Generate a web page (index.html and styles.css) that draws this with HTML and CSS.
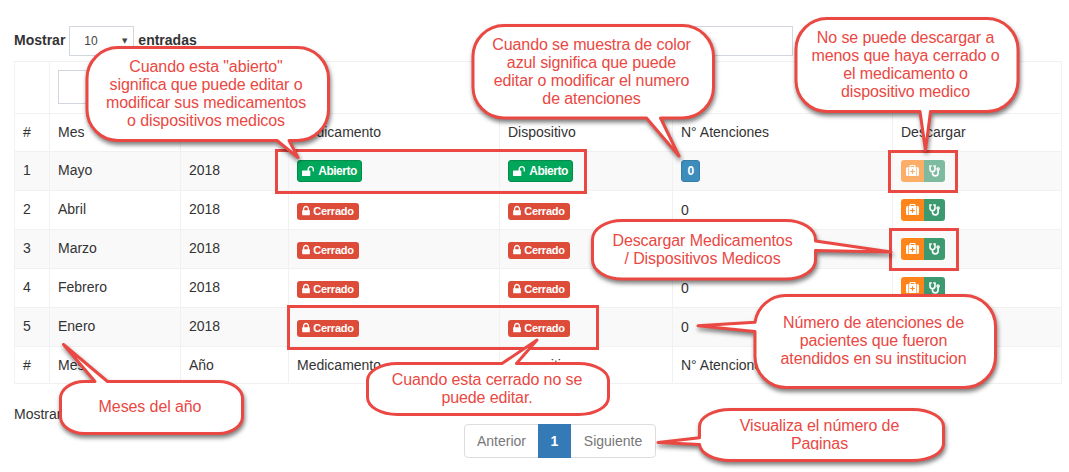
FILE: index.html
```html
<!DOCTYPE html>
<html lang="es">
<head>
<meta charset="utf-8">
<title>Atenciones</title>
<link rel="stylesheet" href="styles.css">
</head>
<body>
<svg class="defs" width="0" height="0">
  <symbol id="unlock" viewBox="0 0 1664 1792"><path d="M1664 576v256q0 26-19 45t-45 19h-64q-26 0-45-19t-19-45v-256q0-106-75-181t-181-75-181 75-75 181v192h96q40 0 68 28t28 68v576q0 40-28 68t-68 28h-960q-40 0-68-28t-28-68v-576q0-40 28-68t68-28h672v-192q0-185 131.500-316.500t316.500-131.500 316.500 131.500 131.500 316.500z"/></symbol>
  <symbol id="lock" viewBox="320 0 1152 1792"><path d="M640 768h512v-192q0-106-75-181t-181-75-181 75-75 181v192zm832 96v576q0 40-28 68t-68 28h-960q-40 0-68-28t-28-68v-576q0-40 28-68t68-28h32v-192q0-184 132-316t316-132 316 132 132 316v192h32q40 0 68 28t28 68z"/></symbol>
  <symbol id="kit" viewBox="0 0 13 12"><path fill-rule="evenodd" d="M3.500 2V1q0-1 1-1h4q1 0 1 1v1h.8v9H2.700V2zM4.700 2h3.600V1.100H4.700zM5.900 4.200v1.700H4.200v1.200h1.700v1.700h1.200V7.100h1.700V5.900H7.100V4.200zM2.100 2v9H1.600Q0 11 0 9.400V3.600Q0 2 1.600 2zM10.900 2h.5Q13 2 13 3.600v5.800Q13 11 11.400 11h-.5z"/></symbol>
  <symbol id="steth" viewBox="0 0 11 12"><path fill="none" stroke="#fff" stroke-width="1.600" stroke-linecap="round" d="M2.200 1H1v3.100a2.500 2.600 0 0 0 5 0V1H4.800M3.500 6.900v1.400a2.800 2.600 0 0 0 5.600 0V5"/><circle cx="9.100" cy="4" r="1.150" fill="none" stroke="#fff" stroke-width="1.300"/></symbol>
</svg>

<div class="toolbar">
  <div class="length"><b>Mostrar</b><span class="select">10<i>▼</i></span><b>entradas</b></div>
  <span class="search-box"></span>
</div>

<table class="grid">
  <colgroup><col class="c1"><col class="c2"><col class="c3"><col class="c4"><col class="c5"><col class="c6"><col class="c7"></colgroup>
  <thead>
    <tr class="filters"><td></td><td><span class="filter"></span></td><td></td><td></td><td></td><td></td><td></td></tr>
    <tr class="head"><td>#</td><td>Mes</td><td></td><td>Medicamento</td><td>Dispositivo</td><td>N° Atenciones</td><td>Descargar</td></tr>
  </thead>
  <tbody>
    <tr><td>1</td><td>Mayo</td><td>2018</td>
      <td><span class="btn open"><svg><use href="#unlock"/></svg>Abierto</span></td>
      <td><span class="btn open"><svg><use href="#unlock"/></svg>Abierto</span></td>
      <td><span class="btn count">0</span></td>
      <td><span class="downloads disabled"><span class="kit"><svg><use href="#kit"/></svg></span><span class="steth"><svg><use href="#steth"/></svg></span></span></td></tr>
    <tr><td>2</td><td>Abril</td><td>2018</td>
      <td><span class="label"><svg><use href="#lock"/></svg>Cerrado</span></td>
      <td><span class="label"><svg><use href="#lock"/></svg>Cerrado</span></td>
      <td class="num">0</td>
      <td><span class="downloads"><span class="kit"><svg><use href="#kit"/></svg></span><span class="steth"><svg><use href="#steth"/></svg></span></span></td></tr>
    <tr><td>3</td><td>Marzo</td><td>2018</td>
      <td><span class="label"><svg><use href="#lock"/></svg>Cerrado</span></td>
      <td><span class="label"><svg><use href="#lock"/></svg>Cerrado</span></td>
      <td></td>
      <td><span class="downloads"><span class="kit"><svg><use href="#kit"/></svg></span><span class="steth"><svg><use href="#steth"/></svg></span></span></td></tr>
    <tr><td>4</td><td>Febrero</td><td>2018</td>
      <td><span class="label"><svg><use href="#lock"/></svg>Cerrado</span></td>
      <td><span class="label"><svg><use href="#lock"/></svg>Cerrado</span></td>
      <td class="num">0</td>
      <td><span class="downloads"><span class="kit"><svg><use href="#kit"/></svg></span><span class="steth"><svg><use href="#steth"/></svg></span></span></td></tr>
    <tr><td>5</td><td>Enero</td><td>2018</td>
      <td><span class="label"><svg><use href="#lock"/></svg>Cerrado</span></td>
      <td><span class="label"><svg><use href="#lock"/></svg>Cerrado</span></td>
      <td class="num">0</td>
      <td></td></tr>
  </tbody>
  <tfoot>
    <tr class="foot"><td>#</td><td>Mes</td><td>Año</td><td>Medicamento</td><td>Dispositivo</td><td>N° Atenciones</td><td></td></tr>
  </tfoot>
</table>

<div class="info">Mostrando</div>
<div class="pager"><span class="prev">Anterior</span><span class="current">1</span><span class="next">Siguiente</span></div>

<svg class="shapes" viewBox="0 0 1069 472">
  <g class="boxes">
    <rect x="276.500" y="150.500" width="309" height="42"/>
    <rect x="288.500" y="306.500" width="309" height="42"/>
    <rect x="889.500" y="151.500" width="67" height="40"/>
    <rect x="890.500" y="229.500" width="67" height="40"/>
  </g>
  <g class="balloons">
    <path class="shadow" d="M118 47.500H297.500A31 31 0 0 1 328.500 78.500V109.500A31 31 0 0 1 297.500 140.500H289L298 157.500L277 140.500H118A31 31 0 0 1 87 109.500V78.500A31 31 0 0 1 118 47.500Z"/>
    <path class="shadow" d="M504 25.500H682.500A31 31 0 0 1 713.500 56.500V87A31 31 0 0 1 682.500 118H660.500L679 156L646.500 118H504A31 31 0 0 1 473 87V56.500A31 31 0 0 1 504 25.500Z"/>
    <path class="shadow" d="M827 18.500H987A31 31 0 0 1 1018 49.500V80.500A31 31 0 0 1 987 111.500H930.500L925.500 150L920 111.500H827A31 31 0 0 1 796 80.500V49.500A31 31 0 0 1 827 18.500Z"/>
    <path class="shadow" d="M622.500 220.500H785.500A30 19 0 0 1 815.500 239.500V241L891 252L815.500 250.500V260A30 19 0 0 1 785.500 279H622.500A30 19 0 0 1 592.500 260V239.500A30 19 0 0 1 622.500 220.500Z"/>
    <path class="shadow" d="M786 295.500H964.500A31 31 0 0 1 995.500 326.500V356.500A31 31 0 0 1 964.500 387.500H786A31 31 0 0 1 755 356.500V331.500L698 325.700L755 322.300A31 31 0 0 1 786 295.500Z"/>
    <path d="M397.500 363.500H502L537 340L516.500 363.500H578.500A30 17 0 0 1 608.500 380.500V397.500A30 17 0 0 1 578.500 414.500H397.500A30 17 0 0 1 367.500 397.500V380.500A30 17 0 0 1 397.500 363.500Z"/>
    <path class="shadow" d="M84.500 381.500H95L63.500 344.500L107.500 381.500H218.500A24 17 0 0 1 242.500 398.500V416.500A24 17 0 0 1 218.500 433.500H84.500A24 17 0 0 1 60.500 416.500V398.500A24 17 0 0 1 84.500 381.500Z"/>
    <path class="shadow" d="M730.500 409.500H912.500A31 17 0 0 1 943.500 426.500V443.500A31 17 0 0 1 912.500 460.500H730.500A31 17 0 0 1 699.500 444.500L658 442.500L699.500 437.700V426.500A31 17 0 0 1 730.500 409.500Z"/>
  </g>
</svg>
<div class="note n1">Cuando esta "abierto"<br>significa que puede editar o<br>modificar sus medicamentos<br>o dispositivos medicos</div>
<div class="note n2">Cuando se muestra de color<br>azul significa que puede<br>editar o modificar el numero<br>de atenciones</div>
<div class="note n3">No se puede descargar a<br>menos que haya cerrado o<br>el medicamento o<br>dispositivo medico</div>
<div class="note n4">Descargar Medicamentos<br>/ Dispositivos Medicos</div>
<div class="note n5">Número de atenciones de<br>pacientes que fueron<br>atendidos en su institucion</div>
<div class="note n6">Cuando esta cerrado no se<br>puede editar.</div>
<div class="note n7">Meses del año</div>
<div class="note n8">Visualiza el número de<br>Paginas</div>
</body>
</html>
```

FILE: styles.css
```css
* { box-sizing: border-box; }
body {
  margin: 0;
  width: 1069px;
  height: 472px;
  padding: 26px 7px 0 14px;
  position: relative;
  overflow: hidden;
  background: #fff;
  color: #333;
  font: 14px/20px "Liberation Sans", Arial, sans-serif;
}
.defs { position: absolute; }
svg { fill: #fff; }

.toolbar { display: flex; justify-content: space-between; height: 35px; padding-right: 269px; }
.length { display: flex; height: 28px; align-items: center; }
.select {
  display: flex; align-items: center; justify-content: space-between;
  width: 65px; height: 30px; margin: 1px 4px 0; padding: 0 6px 0 14px;
  border: 1px solid #d2d6de; font-size: 12px; color: #444;
}
.select i { font: 7px "DejaVu Sans", sans-serif; color: #444; }
.search-box { width: 160px; height: 30px; border: 1px solid #d2d6de; }

.grid {
  width: 1048px; table-layout: fixed;
  border-collapse: separate; border-spacing: 0;
  border: solid #f1f1f1; border-width: 1px 0 0 1px;
}
.c1 { width: 35px; } .c2 { width: 131px; } .c3 { width: 108px; } .c4 { width: 211px; }
.c5 { width: 173px; } .c6 { width: 220px; } .c7 { width: 169px; }
td { height: 39px; padding: 8px 8px 0; vertical-align: top; border: solid #f1f1f1; border-width: 0 1px 1px 0; white-space: nowrap; }
.filters td { height: 52px; }
.head td { height: 38px; }
.foot td { height: 37px; }
tbody tr:nth-child(odd) { background: #f9f9f9; }
.num { padding-top: 9px; }
.filter { display: block; height: 34px; border: 1px solid #d2d6de; }

.btn, .label {
  display: flex; align-items: center; justify-content: center; width: max-content;
  color: #fff; border-radius: 3px; font-weight: bold;
}
.btn { height: 22px; font-size: 12px; letter-spacing: -.5px; }
.open { width: 65px; background: #00a65a; border: 1px solid #008d4c; }
.open svg { width: 12px; height: 13px; margin-right: 4px; }
.count { width: 19px; background: #3c8dbc; border: 1px solid #367fa9; }
.label { width: 62px; height: 17px; margin-top: 4px; padding-bottom: 1px; background: #dd4b39; font-size: 11px; line-height: 16px; letter-spacing: -.25px; }
.label svg { width: 8px; height: 12px; margin-right: 3px; }

.downloads { display: flex; width: 44px; height: 22px; border-radius: 3px; overflow: hidden; }
.downloads > span { display: flex; align-items: center; justify-content: center; }
.kit { width: 23px; background: #ff851b; }
.kit svg { width: 13px; height: 12px; }
.steth { width: 21px; background: #3d9970; }
.steth svg { width: 11px; height: 12px; }
.disabled { opacity: .65; }

.info { margin-top: 20px; height: 20px; width: 50px; overflow: hidden; }
.pager { display: flex; width: 192px; height: 34px; margin-left: 450px; border: 1px solid #ddd; border-radius: 4px; color: #777; line-height: 33px; text-align: center; }
.prev { width: 73px; }
.current { width: 33px; height: 34px; margin-top: -1px; background: #337ab7; color: #fff; font-weight: bold; line-height: 35px; }
.next { flex: 1; }

.shapes { position: absolute; left: 0; top: 0; width: 1069px; height: 472px; }
.boxes { fill: none; stroke: #ea4843; stroke-width: 3; }
.balloons { fill: #fff; stroke: #ea4843; stroke-width: 3; stroke-linejoin: round; }
.shadow { filter: drop-shadow(1px 3px 2px rgba(0, 0, 0, .5)); }

.note { position: absolute; color: #ea4843; font-size: 16px; line-height: 18px; letter-spacing: -.1px; text-align: center; white-space: nowrap; }
.n1 { left: 87px; top: 58px; width: 238px; }
.n2 { left: 473px; top: 36px; width: 237px; }
.n3 { left: 796px; top: 29px; width: 219px; }
.n4 { left: 592px; top: 232px; width: 221px; }
.n5 { left: 755px; top: 314px; width: 237px; }
.n6 { left: 367px; top: 371px; width: 240px; }
.n7 { left: 60px; top: 398px; width: 180px; }
.n8 { left: 699px; top: 417px; width: 241px; height: 33px; overflow: hidden; }
```
